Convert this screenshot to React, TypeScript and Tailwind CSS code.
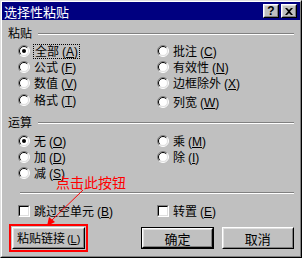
import React from "react";

const Radio = ({ checked = false }: { checked?: boolean }) => (
  <svg width="12" height="12" viewBox="0 0 12 12" className="shrink-0">
    <circle cx="6" cy="6" r="5" fill="#ffffff" />
    <path d="M2.1 9.9 A5.5 5.5 0 0 1 9.9 2.1" fill="none" stroke="#808080" strokeWidth="1" />
    <path d="M9.9 2.1 A5.5 5.5 0 0 1 2.1 9.9" fill="none" stroke="#ffffff" strokeWidth="1" />
    <path d="M2.8 9.2 A4.5 4.5 0 0 1 9.2 2.8" fill="none" stroke="#000000" strokeWidth="1" />
    <path d="M9.2 2.8 A4.5 4.5 0 0 1 2.8 9.2" fill="none" stroke="#dfdfdf" strokeWidth="1" />
    {checked && <circle cx="6" cy="6" r="2" fill="#000000" />}
  </svg>
);

const Mn = ({ k, small = false }: { k: string; small?: boolean }) => (
  <span
    className={
      small
        ? "font-['Liberation_Sans',sans-serif] text-[11px] ml-[2px]"
        : "font-['Liberation_Sans',sans-serif] text-[12px] ml-[3px]"
    }
  >
    (<u>{k}</u>)
  </span>
);

const Opt = ({
  label,
  k,
  checked = false,
  focus = false,
}: {
  label: string;
  k: string;
  checked?: boolean;
  focus?: boolean;
}) => (
  <div className="flex items-center h-4">
    <Radio checked={checked} />
    <span
      className={
        focus
          ? "ml-[3px] px-[1px] border border-dotted border-black leading-[12px] whitespace-nowrap"
          : "ml-[4px] leading-[12px] whitespace-nowrap"
      }
    >
      {label}
      <Mn k={k} />
    </span>
  </div>
);

const Check = ({ label, k }: { label: string; k: string }) => (
  <div className="flex items-center h-4">
    <div className="w-[12px] h-[12px] border border-t-[#808080] border-l-[#808080] border-r-white border-b-white">
      <div className="w-full h-full bg-white border border-t-black border-l-black border-r-[#dfdfdf] border-b-[#dfdfdf]" />
    </div>
    <span className="ml-[4px] leading-[12px] whitespace-nowrap">
      {label}
      <Mn k={k} />
    </span>
  </div>
);

const Heading = ({ text }: { text: string }) => (
  <div className="flex items-center h-4">
    <span className="leading-[14px]">{text}</span>
    <div className="flex-1 ml-[6px] mt-[2px] h-[2px] border-t border-t-[#808080] border-b border-b-white" />
  </div>
);

const Btn = ({
  children,
  def = false,
  className = "",
}: {
  children: React.ReactNode;
  def?: boolean;
  className?: string;
}) => (
  <div className={(def ? "border border-black " : "") + className}>
    <div className="h-full border border-t-white border-l-white border-r-black border-b-black">
      <div className="h-full flex items-center justify-center border border-t-[#dfdfdf] border-l-[#dfdfdf] border-r-[#808080] border-b-[#808080] bg-[#c0c0c0] text-[13px] leading-none whitespace-nowrap">
        {children}
      </div>
    </div>
  </div>
);

const TitleBtn = ({ children }: { children: React.ReactNode }) => (
  <div className="w-[16px] h-[14px] border border-t-white border-l-white border-r-black border-b-black">
    <div className="h-full flex items-center justify-center border border-t-[#dfdfdf] border-l-[#dfdfdf] border-r-[#808080] border-b-[#808080] bg-[#c0c0c0] text-black font-['Liberation_Sans',sans-serif] font-bold text-[12px] leading-none">
      {children}
    </div>
  </div>
);

export default function App() {
  return (
    <div className="relative w-[302px] h-[258px] overflow-hidden bg-[#c0c0c0] text-black font-['Noto_Sans_CJK_SC',sans-serif] text-[12px] border border-t-[#dfdfdf] border-l-[#dfdfdf] border-r-black border-b-black">
      <div className="h-full flex flex-col border border-t-white border-l-white border-r-[#808080] border-b-[#808080]">
        {/* title bar */}
        <div className="h-[18px] bg-[#000080] flex items-center pl-[2px] pr-[3px]">
          <span className="text-white text-[13px] leading-none">选择性粘贴</span>
          <div className="ml-auto flex items-center gap-[2px]">
            <TitleBtn>?</TitleBtn>
            <TitleBtn>
              <svg width="8" height="7" viewBox="0 0 8 7">
                <path d="M0 0 L2 0 L4 2 L6 0 L8 0 L5 3.5 L8 7 L6 7 L4 5 L2 7 L0 7 L3 3.5 Z" fill="#000" />
              </svg>
            </TitleBtn>
          </div>
        </div>

        {/* content */}
        <div className="flex flex-col pl-[6px] pr-[6px] pt-[5px]">
          <Heading text="粘贴" />
          <div className="grid grid-cols-[139px_1fr] pl-[10px] mt-[2px]">
            <div className="flex flex-col">
              <Opt label="全部" k="A" checked focus />
              <Opt label="公式" k="F" />
              <Opt label="数值" k="V" />
              <div className="mt-[1px]">
                <Opt label="格式" k="T" />
              </div>
            </div>
            <div className="flex flex-col">
              <Opt label="批注" k="C" />
              <Opt label="有效性" k="N" />
              <Opt label="边框除外" k="X" />
              <div className="mt-[3px]">
                <Opt label="列宽" k="W" />
              </div>
            </div>
          </div>

          <div className="mt-[4px]">
            <Heading text="运算" />
          </div>
          <div className="grid grid-cols-[139px_1fr] pl-[10px] mt-[3px]">
            <div className="flex flex-col">
              <Opt label="无" k="O" checked />
              <Opt label="加" k="D" />
              <Opt label="减" k="S" />
            </div>
            <div className="flex flex-col">
              <Opt label="乘" k="M" />
              <Opt label="除" k="I" />
            </div>
          </div>

          <div className="mt-[11px] ml-[12px] h-[2px] border-t border-t-[#808080] border-b border-b-white" />

          <div className="grid grid-cols-[139px_1fr] pl-[10px] mt-[9px]">
            <Check label="跳过空单元" k="B" />
            <Check label="转置" k="E" />
          </div>

          <div className="flex items-center mt-[5px] pl-[1px]">
            <div className="border-2 border-[#ff0000] p-[1px] w-[80px] h-[28px]">
              <Btn className="h-full">
                <span className="text-[12px]">
                  粘贴链接<Mn k="L" small />
                </span>
              </Btn>
            </div>
            <Btn def className="ml-[53px] w-[73px] h-[22px]">
              确定
            </Btn>
            <Btn className="ml-[8px] w-[73px] h-[22px]">取消</Btn>
          </div>
        </div>
      </div>

      {/* annotation */}
      <span className="absolute left-[55px] top-[174px] text-[#ff0000] text-[14px] leading-none">
        点击此按钮
      </span>
      <svg className="absolute left-0 top-0" width="302" height="258" viewBox="0 0 302 258">
        <line x1="82" y1="189" x2="49" y2="221" stroke="#ff0000" strokeWidth="1" />
        <path d="M46 225 L48 216 L54 221 Z" fill="#ff0000" />
      </svg>
    </div>
  );
}
